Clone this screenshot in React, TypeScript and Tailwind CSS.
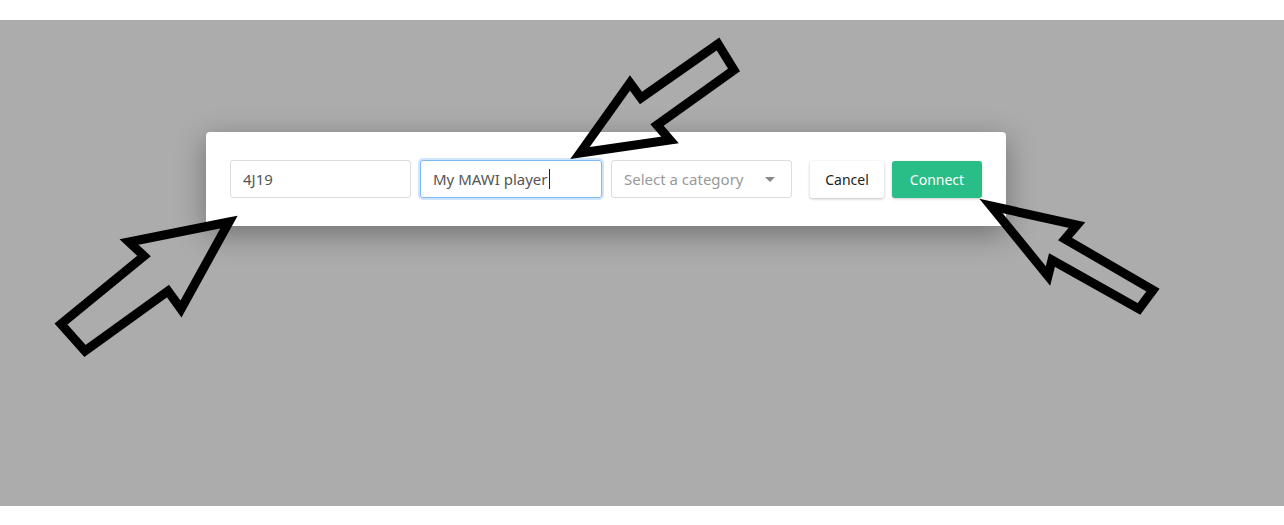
import React from 'react';

const Arrows: React.FC = () => (
  <svg
    className="pointer-events-none absolute inset-0"
    width="1284"
    height="525"
    viewBox="0 0 1284 525"
  >
    <g fill="none" stroke="#000" strokeWidth="9" strokeLinejoin="miter">
      <polygon points="229,222 129,242 144,256 61,324 85,351 168,291 181,309" />
      <polygon points="580,153 630,83 641,98 718,44 734,70 657,125 670,140" />
      <polygon points="991,206 1077,225 1065,239 1153,290 1139,309 1052,260 1048,276" />
    </g>
  </svg>
);

const App: React.FC = () => {
  return (
    <div className="relative flex h-[525px] w-[1284px] flex-col overflow-hidden bg-white font-['Noto_Sans',sans-serif]">
      <div className="h-[20px] shrink-0 bg-white" />
      <div className="flex-1 bg-[#acacac] pl-[206px] pt-[112px]">
        <div className="flex w-[800px] items-center rounded-[4px] bg-white px-6 py-[28px] shadow-[0_8px_30px_rgba(0,0,0,0.35)]">
          <div className="flex h-[38px] w-[181px] items-center rounded-[3px] border border-[#dcdcdc] px-3 text-[15px] text-[#555]">
            4J19
          </div>
          <div className="ml-[9px] flex h-[38px] w-[182px] items-center rounded-[3px] border border-[#7fb9f5] px-3 text-[15px] text-[#555] shadow-[0_0_0_2px_#cfe5fc]">
            My MAWI player
            <span className="ml-[1px] inline-block h-[20px] w-px bg-[#222]" />
          </div>
          <div className="ml-[9px] flex h-[38px] w-[181px] items-center justify-between rounded-[3px] border border-[#dcdcdc] pl-3 pr-4 text-[15px] text-[#999]">
            <span>Select a category</span>
            <span className="h-0 w-0 border-x-[5px] border-t-[5px] border-x-transparent border-t-[#888]" />
          </div>
          <button className="ml-[18px] h-[37px] w-[74px] rounded-[3px] bg-white text-[14px] text-[#222] shadow-[0_1px_3px_rgba(0,0,0,0.25)]">
            Cancel
          </button>
          <button className="ml-[8px] h-[37px] w-[90px] rounded-[3px] bg-[#29bd87] text-[14px] text-white shadow-[0_1px_3px_rgba(0,0,0,0.2)]">
            Connect
          </button>
        </div>
      </div>
      <div className="h-[19px] shrink-0 bg-white" />
      <Arrows />
    </div>
  );
};

export default App;
